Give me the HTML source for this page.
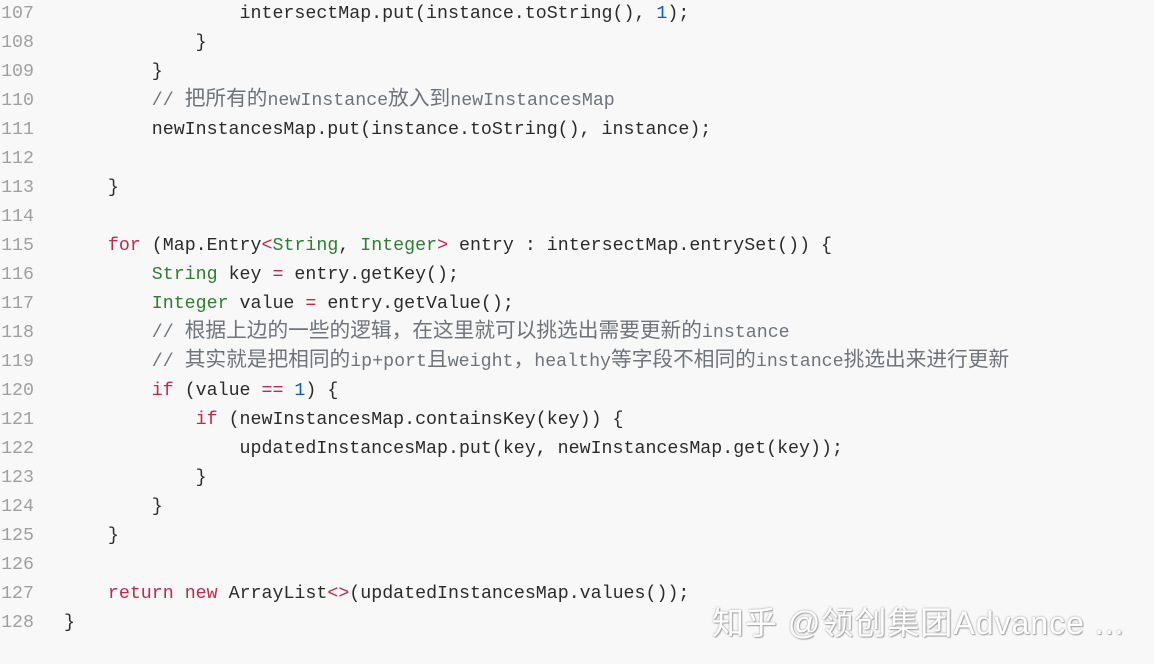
<!DOCTYPE html><html><head><meta charset="utf-8"><style>
html,body{margin:0;background:#f8f8f8;width:1154px;height:664px;overflow:hidden}
pre{margin:0;position:absolute;top:0px;left:0;font:18.3px/29px "Liberation Mono","Noto Sans CJK SC",monospace;color:#2b2b2b}
.n{display:inline-block;width:34px;text-align:right;color:#a0a0a0;margin-right:30px}
.k{color:#c0294a}.t{color:#2e7d32}.d{color:#0d5bb5}.c{color:#6f747a}
.z{font-family:"Noto Sans CJK SC",sans-serif;font-size:20.7px;line-height:0}
.w{position:absolute;left:712px;top:598px;font:32px "Liberation Sans","Noto Sans CJK SC",sans-serif;color:#fff;text-shadow:0 0 2px #999,1px 1px 1px #aaa;letter-spacing:1px}
</style></head><body><pre><span class="n">107</span>                intersectMap.put(instance.toString(), <span class="d">1</span>);
<span class="n">108</span>            }
<span class="n">109</span>        }
<span class="n">110</span>        <span class="c">// <span class="z">把所有的</span>newInstance<span class="z">放入到</span>newInstancesMap</span>
<span class="n">111</span>        newInstancesMap.put(instance.toString(), instance);
<span class="n">112</span>
<span class="n">113</span>    }
<span class="n">114</span>
<span class="n">115</span>    <span class="k">for</span> (Map.Entry<span class="k">&lt;</span><span class="t">String</span>, <span class="t">Integer</span><span class="k">&gt;</span> entry : intersectMap.entrySet()) {
<span class="n">116</span>        <span class="t">String</span> key <span class="k">=</span> entry.getKey();
<span class="n">117</span>        <span class="t">Integer</span> value <span class="k">=</span> entry.getValue();
<span class="n">118</span>        <span class="c">// <span class="z">根据上边的一些的逻辑，在这里就可以挑选出需要更新的</span>instance</span>
<span class="n">119</span>        <span class="c">// <span class="z">其实就是把相同的</span>ip+port<span class="z">且</span>weight<span class="z">，</span>healthy<span class="z">等字段不相同的</span>instance<span class="z">挑选出来进行更新</span></span>
<span class="n">120</span>        <span class="k">if</span> (value <span class="k">==</span> <span class="d">1</span>) {
<span class="n">121</span>            <span class="k">if</span> (newInstancesMap.containsKey(key)) {
<span class="n">122</span>                updatedInstancesMap.put(key, newInstancesMap.get(key));
<span class="n">123</span>            }
<span class="n">124</span>        }
<span class="n">125</span>    }
<span class="n">126</span>
<span class="n">127</span>    <span class="k">return</span> <span class="k">new</span> ArrayList<span class="k">&lt;&gt;</span>(updatedInstancesMap.values());
<span class="n">128</span>}
</pre><div class="w">知乎 @领创集团Advance ...</div></body></html>
